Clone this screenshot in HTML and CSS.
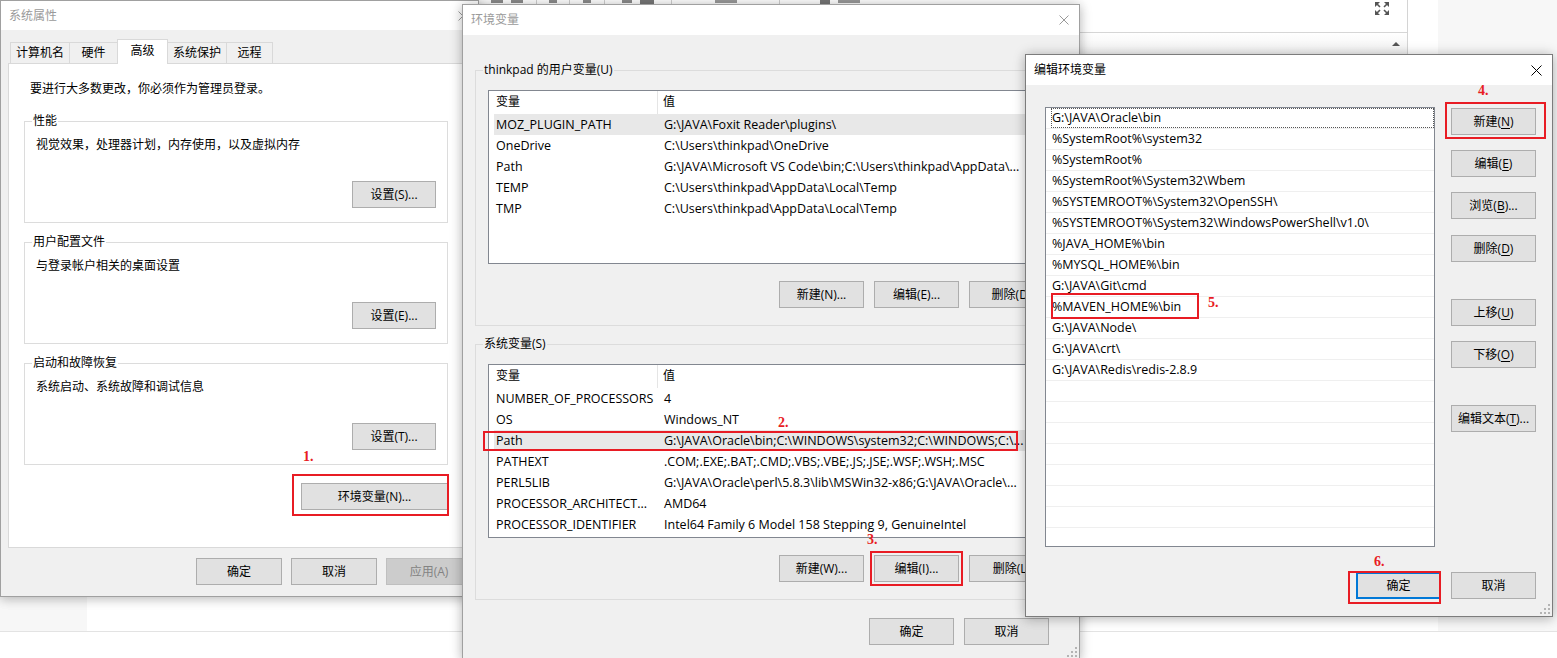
FILE: index.html
```html
<!DOCTYPE html>
<html lang="zh-CN">
<head>
<meta charset="utf-8">
<title>环境变量</title>
<link rel="stylesheet" href="styles.css">
</head>
<body>
<div class="desk">
  <div class="desk-l"></div>
  <div class="desk-m"></div>
  <div class="desk-r"></div>
  <div class="desk-foot"></div>
</div>

<div class="bgapp">
  <div class="bgapp-bar">
    <span class="tb tb1"></span>
    <span class="tb tb2"><i class="frag f-a"></i><i class="frag f-b"></i></span>
    <span class="tb tb3"><i class="frag f-c"></i></span>
    <span class="tb tb4"><i class="frag f-c"></i></span>
    <span class="tb tb5"><i class="frag f-d"></i><i class="frag f-e"></i></span>
    <span class="tb tb6"><i class="frag f-g"></i></span>
    <span class="tb tb7"><i class="frag f-h"></i><i class="frag f-g"></i></span>
    <svg class="expand" width="14" height="13" viewBox="0 0 14 13"><path fill="#555" d="M0 0h5L0 5z M14 0v5L9 0z M0 13V8l5 5z M14 13H9l5-5z"/><path stroke="#555" stroke-width="1.6" d="M1.5 1.5l3.5 3.5M12.5 1.5L9 5M1.5 11.5L5 8M12.5 11.5L9 8"/></svg>
  </div>
  <div class="bgapp-sub"><span class="up"></span></div>
</div>

<!-- 系统属性 -->
<div class="win w-sys">
  <div class="titlebar inactive">
    <span>系统属性</span>
    <svg class="x" width="10" height="10" viewBox="0 0 10 10"><path d="M0.5 0.5L9.5 9.5M9.5 0.5L0.5 9.5" stroke="currentColor" stroke-width="1"/></svg>
  </div>
  <div class="tabs">
    <div class="tab t1">计算机名</div>
    <div class="tab t2">硬件</div>
    <div class="tab t3 sel">高级</div>
    <div class="tab t4">系统保护</div>
    <div class="tab t5">远程</div>
  </div>
  <div class="panel">
    <p class="note">要进行大多数更改，你必须作为管理员登录。</p>
    <div class="group first">
      <div class="group-title">性能</div>
      <p class="gtext">视觉效果，处理器计划，内存使用，以及虚拟内存</p>
      <div class="grow"><div class="btn">设置(S)...</div></div>
    </div>
    <div class="group">
      <div class="group-title">用户配置文件</div>
      <p class="gtext">与登录帐户相关的桌面设置</p>
      <div class="grow"><div class="btn">设置(E)...</div></div>
    </div>
    <div class="group">
      <div class="group-title">启动和故障恢复</div>
      <p class="gtext">系统启动、系统故障和调试信息</p>
      <div class="grow"><div class="btn">设置(T)...</div></div>
    </div>
    <div class="env-row"><div class="btn btn-env">环境变量(N)...</div></div>
  </div>
  <div class="dlg-btns">
    <div class="btn">确定</div>
    <div class="btn">取消</div>
    <div class="btn disabled">应用(A)</div>
  </div>
</div>

<!-- 环境变量 -->
<div class="win w-env">
  <div class="titlebar inactive">
    <span>环境变量</span>
    <svg class="x" width="10" height="10" viewBox="0 0 10 10"><path d="M0.5 0.5L9.5 9.5M9.5 0.5L0.5 9.5" stroke="currentColor" stroke-width="1"/></svg>
  </div>
  <div class="env-body">
    <div class="group first">
      <div class="group-title">thinkpad 的用户变量(U)</div>
      <div class="lv">
        <div class="lv-head"><div>变量</div><div>值</div></div>
        <div class="lv-row sel"><div>MOZ_PLUGIN_PATH</div><div>G:\JAVA\Foxit Reader\plugins\</div></div>
        <div class="lv-row"><div>OneDrive</div><div>C:\Users\thinkpad\OneDrive</div></div>
        <div class="lv-row"><div>Path</div><div>G:\JAVA\Microsoft VS Code\bin;C:\Users\thinkpad\AppData\...</div></div>
        <div class="lv-row"><div>TEMP</div><div>C:\Users\thinkpad\AppData\Local\Temp</div></div>
        <div class="lv-row"><div>TMP</div><div>C:\Users\thinkpad\AppData\Local\Temp</div></div>
      </div>
      <div class="lv-btns">
        <div class="btn">新建(N)...</div>
        <div class="btn">编辑(E)...</div>
        <div class="btn">删除(D)</div>
      </div>
    </div>
    <div class="group">
      <div class="group-title">系统变量(S)</div>
      <div class="lv">
        <div class="lv-head"><div>变量</div><div>值</div></div>
        <div class="lv-row"><div>NUMBER_OF_PROCESSORS</div><div>4</div></div>
        <div class="lv-row"><div>OS</div><div>Windows_NT</div></div>
        <div class="lv-row sel"><div>Path</div><div>G:\JAVA\Oracle\bin;C:\WINDOWS\system32;C:\WINDOWS;C:\...</div></div>
        <div class="lv-row"><div>PATHEXT</div><div>.COM;.EXE;.BAT;.CMD;.VBS;.VBE;.JS;.JSE;.WSF;.WSH;.MSC</div></div>
        <div class="lv-row"><div>PERL5LIB</div><div>G:\JAVA\Oracle\perl\5.8.3\lib\MSWin32-x86;G:\JAVA\Oracle\...</div></div>
        <div class="lv-row"><div>PROCESSOR_ARCHITECT...</div><div>AMD64</div></div>
        <div class="lv-row"><div>PROCESSOR_IDENTIFIER</div><div>Intel64 Family 6 Model 158 Stepping 9, GenuineIntel</div></div>
      </div>
      <div class="lv-btns">
        <div class="btn">新建(W)...</div>
        <div class="btn">编辑(I)...</div>
        <div class="btn">删除(L)</div>
      </div>
    </div>
    <div class="env-foot">
      <div class="btn">确定</div>
      <div class="btn">取消</div>
    </div>
  </div>
  <svg class="grip" width="10" height="10" viewBox="0 0 10 10"><g fill="#b4b4b4"><rect x="8" y="0" width="2" height="2"/><rect x="4" y="4" width="2" height="2"/><rect x="8" y="4" width="2" height="2"/><rect x="0" y="8" width="2" height="2"/><rect x="4" y="8" width="2" height="2"/><rect x="8" y="8" width="2" height="2"/></g></svg>
</div>

<!-- 编辑环境变量 -->
<div class="win w-ed">
  <div class="titlebar">
    <span>编辑环境变量</span>
    <svg class="x" width="11" height="11" viewBox="0 0 11 11"><path d="M0.5 0.5L10.5 10.5M10.5 0.5L0.5 10.5" stroke="currentColor" stroke-width="1"/></svg>
  </div>
  <div class="ed-body">
    <div class="elist">
      <div class="item focus"><span>G:\JAVA\Oracle\bin</span></div>
      <div class="item"><span>%SystemRoot%\system32</span></div>
      <div class="item"><span>%SystemRoot%</span></div>
      <div class="item"><span>%SystemRoot%\System32\Wbem</span></div>
      <div class="item"><span>%SYSTEMROOT%\System32\OpenSSH\</span></div>
      <div class="item"><span>%SYSTEMROOT%\System32\WindowsPowerShell\v1.0\</span></div>
      <div class="item"><span>%JAVA_HOME%\bin</span></div>
      <div class="item"><span>%MYSQL_HOME%\bin</span></div>
      <div class="item"><span>G:\JAVA\Git\cmd</span></div>
      <div class="item"><span>%MAVEN_HOME%\bin</span></div>
      <div class="item"><span>G:\JAVA\Node\</span></div>
      <div class="item"><span>G:\JAVA\crt\</span></div>
      <div class="item"><span>G:\JAVA\Redis\redis-2.8.9</span></div>
      <div class="item"><span></span></div>
      <div class="item"><span></span></div>
      <div class="item"><span></span></div>
      <div class="item"><span></span></div>
      <div class="item"><span></span></div>
      <div class="item"><span></span></div>
      <div class="item"><span></span></div>
      <div class="item"><span></span></div>
    </div>
    <div class="ed-btns">
      <div class="btn b1">新建(<u>N</u>)</div>
      <div class="btn b2">编辑(<u>E</u>)</div>
      <div class="btn b3">浏览(<u>B</u>)...</div>
      <div class="btn b4">删除(<u>D</u>)</div>
      <div class="btn b5">上移(<u>U</u>)</div>
      <div class="btn b6">下移(<u>O</u>)</div>
      <div class="btn b7">编辑文本(<u>T</u>)...</div>
    </div>
    <div class="ed-foot">
      <div class="btn default">确定</div>
      <div class="btn">取消</div>
    </div>
  </div>
  <svg class="grip" width="10" height="10" viewBox="0 0 10 10"><g fill="#b4b4b4"><rect x="8" y="0" width="2" height="2"/><rect x="4" y="4" width="2" height="2"/><rect x="8" y="4" width="2" height="2"/><rect x="0" y="8" width="2" height="2"/><rect x="4" y="8" width="2" height="2"/><rect x="8" y="8" width="2" height="2"/></g></svg>
</div>

<!-- annotations -->
<div class="rbox r1"></div>
<div class="rbox r2"></div>
<div class="rbox r3"></div>
<div class="rbox r4"></div>
<div class="rbox r5"></div>
<div class="rbox r6"></div>
<span class="mark m1">1.</span>
<span class="mark m2">2.</span>
<span class="mark m3">3.</span>
<span class="mark m4">4.</span>
<span class="mark m5">5.</span>
<span class="mark m6">6.</span>
</body>
</html>
```

FILE: styles.css
```css
* { box-sizing: border-box; }
html, body { margin: 0; padding: 0; }
body {
  width: 1557px;
  height: 658px;
  position: relative;
  overflow: hidden;
  background: #fff;
  font-family: "Open Sans", "Noto Sans CJK SC", sans-serif;
  font-size: 12px;
  line-height: 16px;
  color: #000;
}
p { margin: 0; }
u { text-decoration: underline; text-underline-offset: 2px; }

/* desktop / background page */
.desk {
  display: grid;
  grid-template-columns: 87px 1fr 119px;
  grid-template-rows: 631px 27px;
  height: 658px;
}
.desk-l, .desk-r { background: #f7f7f7; }
.desk-foot { grid-column: 1 / -1; border-top: 1px solid #e3e3e3; }

.bgapp {
  position: absolute;
  left: 440px;
  top: 0;
  width: 968px;
  height: 54px;
  background: #fff;
  border-right: 1px solid #d4d4d4;
}
.bgapp-bar {
  height: 33px;
  border-bottom: 1px solid #d6d6d6;
  display: flex;
  align-items: flex-start;
  overflow: hidden;
}
.tb {
  height: 14px;
  border-right: 1px solid #d0d0d0;
  display: flex;
  justify-content: center;
  align-items: flex-start;
  gap: 8px;
}
.frag { display: block; height: 3px; background: #8c8c8c; }
.f-a { width: 12px; }
.f-b { width: 12px; }
.f-c { width: 8px; }
.f-d { width: 10px; }
.f-e { width: 14px; height: 4px; background: #777; }
.f-g { width: 22px; background: #9a9a9a; }
.f-h { width: 10px; height: 4px; background: #777; }
.tb1 { width: 38px; }
.tb2 { width: 59px; }
.tb3 { width: 33px; }
.tb4 { width: 35px; }
.tb5 { width: 67px; }
.tb6 { width: 108px; }
.tb7 { width: 120px; border-right: 0; }
.expand { margin: 2px 18px 0 auto; flex: none; }
.bgapp-sub {
  height: 21px;
  background: linear-gradient(#fff, #f1f1f1);
  display: flex;
  justify-content: flex-end;
  align-items: center;
  padding-right: 7px;
}
.up {
  width: 0;
  height: 0;
  border-left: 4px solid transparent;
  border-right: 4px solid transparent;
  border-bottom: 4px solid #555;
}

/* windows */
.win {
  position: absolute;
  background: #f0f0f0;
  border: 1px solid #a0a0a0;
  display: flex;
  flex-direction: column;
  box-shadow: 0 0 12px rgba(0, 0, 0, 0.2), 0 3px 10px rgba(0, 0, 0, 0.12);
}
.w-sys { left: 0; top: 0; width: 479px; height: 597px; z-index: 2; }
.w-env { left: 462px; top: 4px; width: 618px; height: 656px; z-index: 3; }
.w-ed { left: 1025px; top: 54px; width: 528px; height: 563px; z-index: 4; border-color: #7c7c7c; }

.titlebar {
  flex: none;
  height: 30px;
  background: #fff;
  display: flex;
  align-items: center;
  justify-content: space-between;
  padding: 0 10px 0 8px;
}
.w-sys .titlebar { height: 29px; }
.titlebar.inactive { color: #9a9a9a; }
.x { display: block; }

.btn {
  display: flex;
  align-items: center;
  justify-content: center;
  flex: none;
  height: 27px;
  background: #e1e1e1;
  border: 1px solid #adadad;
  white-space: nowrap;
}
.btn.disabled { background: #cccccc; border-color: #bfbfbf; color: #838383; }
.btn.default { border: 2px solid #0078d7; }

/* system properties */
.tabs {
  display: flex;
  align-items: flex-end;
  height: 24px;
  margin-top: 9px;
  padding-left: 9px;
}
.tab {
  height: 21px;
  border: 1px solid #d9d9d9;
  border-bottom: 0;
  background: #f0f0f0;
  text-align: center;
  line-height: 20px;
  margin-left: -1px;
}
.tab:first-child { margin-left: 0; }
.tab.sel {
  height: 25px;
  margin-bottom: -1px;
  background: #fff;
  position: relative;
  z-index: 1;
  line-height: 22px;
}
.t1 { width: 60px; }
.t2 { width: 49px; }
.t3 { width: 51px; }
.t4 { width: 60px; }
.t5 { width: 47px; }

.panel {
  margin-left: 7px;
  width: 463px;
  background: #fff;
  border: 1px solid #d9d9d9;
  padding: 0 0 37px 15px;
}
.note { margin: 17px 0 0 6px; }

.group { border: 1px solid #dcdcdc; }
.group-title {
  width: max-content;
  margin-top: -9px;
  line-height: 16px;
  padding: 0 1px;
}
.panel .group { width: 424px; margin-top: 19px; padding: 0 11px 14px 11px; }
.panel .group.first { margin-top: 24px; }
.panel .group-title { background: #fff; margin-left: -4px; }
.gtext { margin-top: 8px; }
.grow { display: flex; justify-content: flex-end; margin-top: 28px; }
.grow .btn { width: 84px; }
.env-row { display: flex; justify-content: flex-end; width: 424px; margin-top: 18px; }
.btn-env { width: 147px; }

.dlg-btns {
  display: flex;
  justify-content: flex-end;
  gap: 9px;
  margin-top: 10px;
  padding-right: 6px;
}
.dlg-btns .btn { width: 86px; }

/* environment variables */
.env-body { padding: 0 12px; }
.w-env .group { margin-top: 18px; padding: 0 12px 17px 12px; }
.w-env .group.first { margin-top: 35px; }
.w-env .group-title { background: #f0f0f0; margin-left: -5px; }
.lv {
  margin-top: 12px;
  height: 174px;
  background: #fff;
  border: 1px solid #828790;
  overflow: hidden;
}
.lv-head {
  display: grid;
  grid-template-columns: 169px 1fr;
  height: 23px;
  line-height: 22px;
}
.lv-head div:first-child { padding-left: 7px; border-right: 1px solid #e5e5e5; }
.lv-head div + div { padding-left: 5px; }
.lv-row {
  display: grid;
  grid-template-columns: 164px 1fr;
  height: 21px;
  line-height: 21px;
  margin-left: 5px;
  font-size: 12.5px;
}
.lv-row div { white-space: nowrap; overflow: hidden; }
.lv-row div:first-child { padding-left: 2px; }
.lv-row div + div { padding-left: 6px; }
.lv-row.sel { background: #e8e8e8; }
.lv-btns { display: flex; justify-content: flex-end; gap: 10px; margin-top: 17px; }
.w-env .btn { width: 85px; }
.env-foot {
  display: flex;
  justify-content: flex-end;
  gap: 10px;
  margin-top: 18px;
  padding-right: 18px;
}

.grip { position: absolute; right: 2px; bottom: 2px; }

/* edit environment variable */
.ed-body {
  display: grid;
  grid-template-columns: 390px 85px;
  column-gap: 16px;
  padding: 22px 0 0 19px;
}
.elist {
  height: 440px;
  background: #fff;
  border: 1px solid #828790;
  overflow: hidden;
}
.item { height: 21px; border-bottom: 1px solid #efefef; padding-left: 5px; }
.item span {
  display: block;
  height: 20px;
  line-height: 20px;
  padding-left: 1px;
  white-space: nowrap;
  font-size: 12.5px;
}
.item.focus span { outline: 1px dotted #555; outline-offset: -1px; }
.ed-btns { display: flex; flex-direction: column; }
.ed-btns .btn { width: 85px; }
.b1 { margin-top: 1px; }
.b2, .b3, .b6 { margin-top: 15px; }
.b4 { margin-top: 16px; }
.b5, .b7 { margin-top: 37px; }
.ed-foot {
  grid-column: 1 / -1;
  display: flex;
  justify-content: flex-end;
  gap: 10px;
  margin-top: 25px;
}
.ed-foot .btn { width: 85px; }

/* annotations */
.rbox { position: absolute; border: 2px solid #e81c24; z-index: 10; }
.r1 { left: 292px; top: 474px; width: 157px; height: 42px; }
.r2 { left: 483px; top: 431px; width: 535px; height: 20px; }
.r3 { left: 870px; top: 551px; width: 93px; height: 35px; }
.r4 { left: 1445px; top: 102px; width: 101px; height: 37px; }
.r5 { left: 1051px; top: 293px; width: 148px; height: 26px; }
.r6 { left: 1348px; top: 571px; width: 93px; height: 33px; }
.mark {
  position: absolute;
  z-index: 10;
  color: #e81c24;
  font-family: "Liberation Serif", serif;
  font-weight: bold;
  font-size: 14px;
  line-height: 14px;
}
.m1 { left: 303px; top: 450px; }
.m2 { left: 778px; top: 416px; }
.m3 { left: 867px; top: 533px; }
.m4 { left: 1478px; top: 84px; }
.m5 { left: 1208px; top: 296px; }
.m6 { left: 1374px; top: 555px; }
```
